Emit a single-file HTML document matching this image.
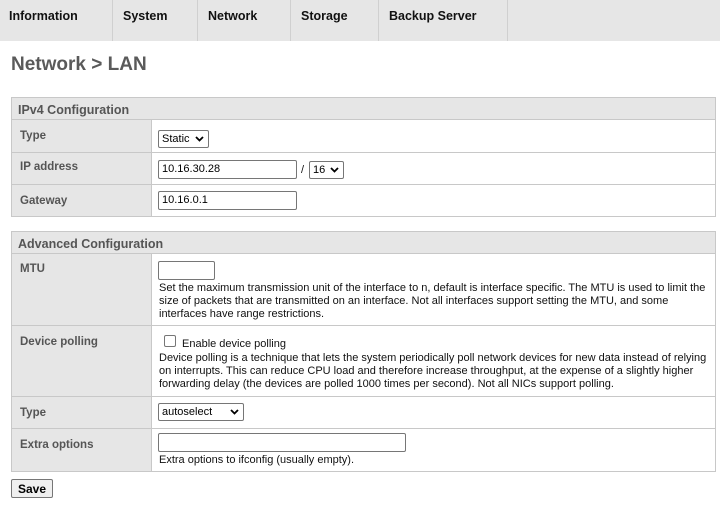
<!DOCTYPE html>
<html><head><style>
*{margin:0;padding:0;box-sizing:border-box}
body{width:720px;height:505px;background:#fff;font-family:"Liberation Sans",sans-serif;font-size:11px;color:#000;position:relative;overflow:hidden}
.a{position:absolute}
.nav{left:0;top:0;width:720px;height:41px;background:#e6e6e6}
.tab{top:0;height:41px;border-right:1px solid #d0d0d0;font-weight:bold;font-size:12.5px;padding:9px 0 0 0;color:#111}
h1{position:absolute;left:11px;top:54px;font-size:19px;color:#5a5a5a;font-weight:bold}
.box{left:11px;width:705px;border:1px solid #c8c8c8;background:#fff}
.hd{position:absolute;left:0;width:703px;height:22px;background:#e6e6e6;color:#555;font-weight:bold;font-size:12.5px;padding:5px 0 0 6px;border-bottom:1px solid #c8c8c8}
.lb{position:absolute;left:0;width:140px;background:#e6e6e6;color:#555;font-weight:bold;font-size:11.5px;padding:10px 0 0 8px;border-right:1px solid #c8c8c8;border-bottom:1px solid #c8c8c8}
.ln{position:absolute;left:140px;width:563px;border-bottom:1px solid #c8c8c8}
.in{position:absolute;height:19px;border:1px solid #767676;border-radius:2px;background:#fff;padding:2px 3px;font-size:11px}
.sel{position:absolute;height:18px;border:1px solid #767676;border-radius:2px;background:#fff;padding:2px 3px;font-size:11px}
.sel svg{position:absolute;right:4px;top:5px}
.t{position:absolute;white-space:nowrap;line-height:13px;color:#111}
</style></head><body>
<div class="a nav"></div>
<div class="a tab" style="left:0;width:113px;padding-left:9px">Information</div>
<div class="a tab" style="left:113px;width:85px;padding-left:10px">System</div>
<div class="a tab" style="left:198px;width:93px;padding-left:10px">Network</div>
<div class="a tab" style="left:291px;width:88px;padding-left:10px">Storage</div>
<div class="a tab" style="left:379px;width:129px;padding-left:10px">Backup Server</div>
<h1>Network &gt; LAN</h1>

<div class="a box" style="top:97px;height:120px">
<div class="hd" style="top:0">IPv4 Configuration</div>
<div class="lb" style="top:22px;height:33px">Type</div>
<div class="lb" style="top:55px;height:32px;padding-top:8px">IP address</div>
<div class="lb" style="top:87px;height:31px;border-bottom:none">Gateway</div>
<div class="ln" style="top:22px;height:33px"></div>
<div class="ln" style="top:55px;height:32px"></div>
<div class="sel" style="left:146px;top:32px;width:51px">Static<svg width="9" height="6"><path d="M1 1L4.5 4.5L8 1" stroke="#000" stroke-width="1.8" fill="none"/></svg></div>
<div class="in" style="left:146px;top:62px;width:139px">10.16.30.28</div>
<div class="t" style="left:289px;top:66px">/</div>
<div class="sel" style="left:297px;top:63px;width:35px">16<svg width="9" height="6"><path d="M1 1L4.5 4.5L8 1" stroke="#000" stroke-width="1.8" fill="none"/></svg></div>
<div class="in" style="left:146px;top:93px;width:139px">10.16.0.1</div>
</div>

<div class="a box" style="top:231px;height:241px">
<div class="hd" style="top:0">Advanced Configuration</div>
<div class="lb" style="top:22px;height:72px;padding-top:9px">MTU</div>
<div class="lb" style="top:94px;height:71px">Device polling</div>
<div class="lb" style="top:165px;height:32px">Type</div>
<div class="lb" style="top:197px;height:42px;border-bottom:none">Extra options</div>
<div class="ln" style="top:22px;height:72px"></div>
<div class="ln" style="top:94px;height:71px"></div>
<div class="ln" style="top:165px;height:32px"></div>
<div class="in" style="left:146px;top:29px;width:57px"></div>
<div class="t" style="left:147px;top:50px">Set the maximum transmission unit of the interface to n, default is interface specific. The MTU is used to limit the<br>size of packets that are transmitted on an interface. Not all interfaces support setting the MTU, and some<br>interfaces have range restrictions.</div>
<div class="a" style="left:152px;top:103px;width:12px;height:12px;border:1px solid #767676;border-radius:2px"></div>
<div class="t" style="left:170px;top:106px">Enable device polling</div>
<div class="t" style="left:147px;top:120px">Device polling is a technique that lets the system periodically poll network devices for new data instead of relying<br>on interrupts. This can reduce CPU load and therefore increase throughput, at the expense of a slightly higher<br>forwarding delay (the devices are polled 1000 times per second). Not all NICs support polling.</div>
<div class="sel" style="left:146px;top:171px;width:86px">autoselect<svg width="9" height="6"><path d="M1 1L4.5 4.5L8 1" stroke="#000" stroke-width="1.8" fill="none"/></svg></div>
<div class="in" style="left:146px;top:201px;width:248px"></div>
<div class="t" style="left:147px;top:222px">Extra options to ifconfig (usually empty).</div>
</div>

<div class="a" style="left:11px;top:479px;width:42px;height:19px;border:1px solid #767676;border-radius:2px;background:#efefef;font-weight:bold;font-size:12px;text-align:center;padding-top:2px">Save</div>
</body></html>
